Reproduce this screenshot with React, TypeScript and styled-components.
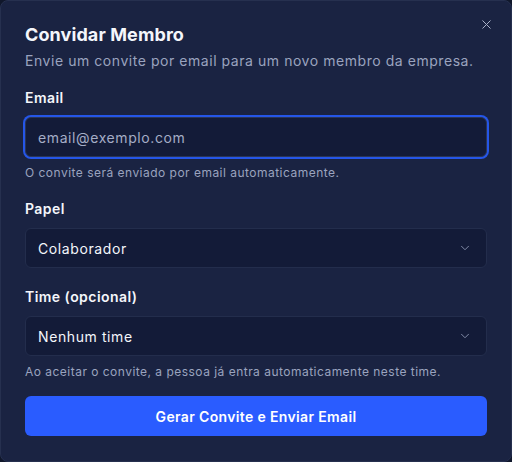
import React, { useState } from 'react'
import styled, { createGlobalStyle } from 'styled-components'
import { X, ChevronDown } from 'lucide-react'

const GlobalStyle = createGlobalStyle`
  html, body {
    margin: 0;
    padding: 0;
    background: #10172b;
  }
  * {
    box-sizing: border-box;
  }
`

const Dialog = styled.div`
  position: relative;
  width: 512px;
  height: 462px;
  background: #1a2342;
  border: 1px solid #26304f;
  border-radius: 8px;
  padding: 24px;
  font-family: Inter, "Noto Sans", sans-serif;
  display: flex;
  flex-direction: column;
`

const CloseBtn = styled.button`
  position: absolute;
  top: 15px;
  right: 17px;
  width: 16px;
  height: 16px;
  padding: 0;
  border: none;
  background: transparent;
  color: #aab1c8;
  display: flex;
  align-items: center;
  justify-content: center;
  cursor: pointer;
`

const Header = styled.div`
  display: flex;
  flex-direction: column;
  gap: 6px;
  margin-bottom: 17px;
`

const Title = styled.h2`
  margin: 0;
  font-size: 18px;
  line-height: 20px;
  font-weight: 700;
  color: #f4f6fb;
  letter-spacing: 0.1px;
`

const Subtitle = styled.p`
  margin: 0;
  font-size: 14px;
  line-height: 20px;
  color: #9aa3bf;
  letter-spacing: 0.55px;
`

const Field = styled.div<{ $gap?: number }>`
  display: flex;
  flex-direction: column;
  flex-shrink: 0;
  margin-bottom: ${p => p.$gap ?? 0}px;
`

const Label = styled.label`
  font-size: 14px;
  line-height: 20px;
  font-weight: 600;
  color: #f4f6fb;
  letter-spacing: 0.45px;
  margin-bottom: 9px;
`

const Input = styled.input`
  height: 40px;
  width: 100%;
  flex-shrink: 0;
  background: #131b38;
  border: 1px solid #2a3556;
  border-radius: 6px;
  padding: 0 12px;
  font-family: inherit;
  font-size: 14px;
  letter-spacing: 0.6px;
  color: #f4f6fb;
  outline: none;
  box-shadow: 0 0 0 2px #2556e8;

  &::placeholder {
    color: #a5adc6;
  }
`

const SelectBox = styled.button`
  height: 40px;
  width: 100%;
  flex-shrink: 0;
  background: #131b38;
  border: 1px solid #232d4c;
  border-radius: 6px;
  padding: 0 14px 0 12px;
  font-family: inherit;
  font-size: 14px;
  letter-spacing: 0.6px;
  color: #f4f6fb;
  display: flex;
  align-items: center;
  justify-content: space-between;
  cursor: pointer;

  svg {
    color: #8891ad;
  }
`

const Hint = styled.p`
  margin: 8px 0 0;
  font-size: 12px;
  line-height: 16px;
  color: #9aa3bf;
  letter-spacing: 0.48px;
`

const Submit = styled.button`
  margin-top: 16px;
  height: 40px;
  width: 100%;
  flex-shrink: 0;
  border: none;
  border-radius: 6px;
  background: #2a5cff;
  color: #ffffff;
  font-family: inherit;
  font-size: 14px;
  font-weight: 600;
  letter-spacing: 0.35px;
  cursor: pointer;
`

export default function App() {
  const [email, setEmail] = useState('')

  return (
    <>
      <GlobalStyle />
      <Dialog>
        <CloseBtn aria-label="Fechar">
          <X size={15} strokeWidth={1.6} />
        </CloseBtn>
        <Header>
          <Title>Convidar Membro</Title>
          <Subtitle>Envie um convite por email para um novo membro da empresa.</Subtitle>
        </Header>

        <Field $gap={18}>
          <Label>Email</Label>
          <Input
            type="email"
            placeholder="email@exemplo.com"
            value={email}
            onChange={e => setEmail(e.target.value)}
          />
          <Hint>O convite será enviado por email automaticamente.</Hint>
        </Field>

        <Field $gap={19}>
          <Label>Papel</Label>
          <SelectBox>
            <span>Colaborador</span>
            <ChevronDown size={14} strokeWidth={1.6} />
          </SelectBox>
        </Field>

        <Field>
          <Label>Time (opcional)</Label>
          <SelectBox>
            <span>Nenhum time</span>
            <ChevronDown size={14} strokeWidth={1.6} />
          </SelectBox>
          <Hint>Ao aceitar o convite, a pessoa já entra automaticamente neste time.</Hint>
        </Field>

        <Submit>Gerar Convite e Enviar Email</Submit>
      </Dialog>
    </>
  )
}
